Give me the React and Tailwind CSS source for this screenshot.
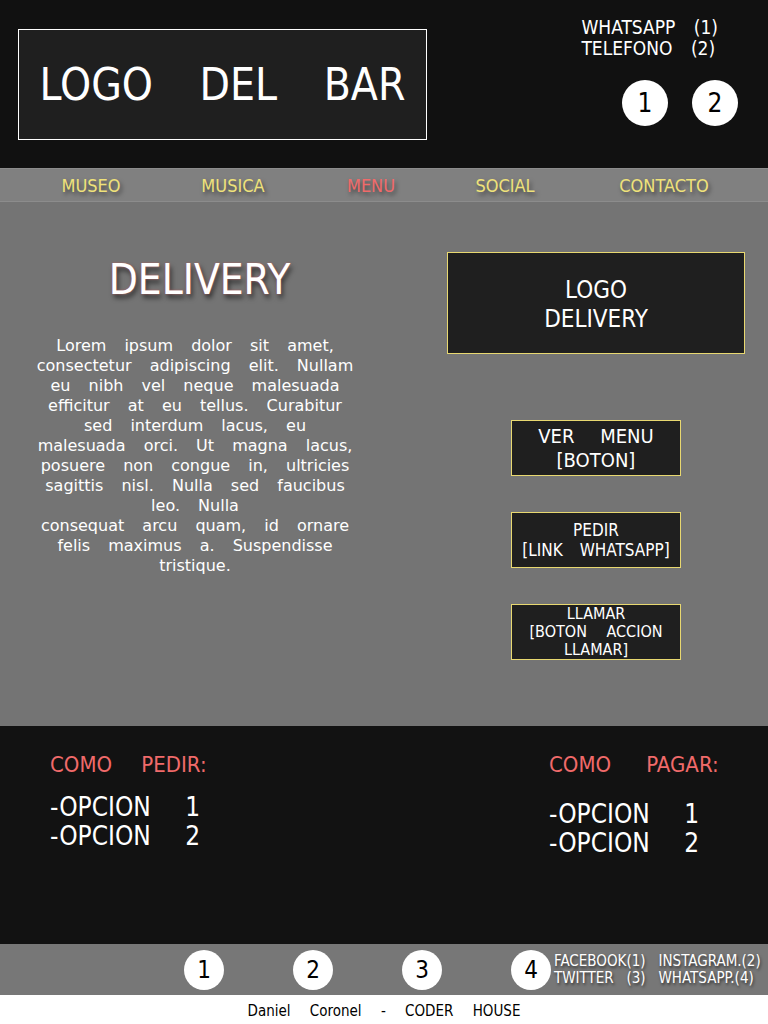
const cond = { fontFamily: '"DejaVu Sans Condensed", "DejaVu Sans", sans-serif' }

function Circle({ n, size = 'h-[46px] w-[46px] text-[26px]' }) {
  return (
    <div className={`flex items-center justify-center rounded-full bg-white text-black ${size}`}>
      {n}
    </div>
  )
}

const lorem = [
  'Lorem ipsum dolor sit amet,',
  'consectetur adipiscing elit. Nullam',
  'eu nibh vel neque malesuada',
  'efficitur at eu tellus. Curabitur',
  'sed interdum lacus, eu',
  'malesuada orci. Ut magna lacus,',
  'posuere non congue in, ultricies',
  'sagittis nisl. Nulla sed faucibus',
  'leo. Nulla',
  'consequat arcu quam, id ornare',
  'felis maximus a. Suspendisse',
  'tristique.',
]

export default function App() {
  const nav = [
    ['MUSEO', 'w-[182px]'],
    ['MUSICA', 'w-[102px]'],
    ['MENU', 'w-[174px]'],
    ['SOCIAL', 'w-[94px]'],
    ['CONTACTO', 'w-[224px]'],
  ]
  return (
    <div className="w-[768px] min-h-[1024px] bg-white" style={cond}>
      <header className="flex h-[168px] items-start justify-between bg-[#111111] pl-[18px] pr-[30px] pt-[29px]">
        <div className="flex h-[111px] w-[409px] items-center justify-center border border-white bg-[#1f1f1f] text-[44px] text-white [word-spacing:34px]">
          LOGO DEL BAR
        </div>
        <div className="flex flex-col items-end">
          <div className="mt-[-12px] mr-[20px] text-[19px] leading-[21px] text-white">
            <div className="[word-spacing:13px]">WHATSAPP (1)</div>
            <div className="[word-spacing:13px]">TELEFONO (2)</div>
          </div>
          <div className="mt-[21px] flex gap-[24px]">
            <Circle n="1" />
            <Circle n="2" />
          </div>
        </div>
      </header>

      <nav className="flex h-[34px] items-center overflow-hidden border-y border-[#8c8c8c] bg-[#808080] text-[18px] [text-shadow:2px_3px_4px_rgba(0,0,0,0.5)]">
        <div className="flex items-center">
          {nav.map(([item, w]) => (
            <div
              key={item}
              className={`shrink-0 text-center ${w} ${item === 'MENU' ? 'text-[#f06a6a]' : 'text-[#efe27a]'}`}
            >
              {item}
            </div>
          ))}
        </div>
      </nav>

      <main className="flex h-[524px] bg-[#747474]">
        <div className="flex w-[400px] flex-col items-center pt-[52px]">
          <h1 className="text-[42px] leading-[52px] text-white [text-shadow:0_0_2px_#c06060,2px_4px_5px_rgba(0,0,0,0.6)]">
            DELIVERY
          </h1>
          <div
            className="mt-[30px] ml-[-9px] text-center text-[16px] leading-[20px] text-white [word-spacing:13px]"
            style={{ fontFamily: '"DejaVu Sans", sans-serif' }}
          >
            {lorem.map((line) => (
              <div key={line}>{line}</div>
            ))}
          </div>
        </div>
        <div className="flex flex-1 flex-col items-center pt-[50px] pl-[48px] pr-[23px]">
          <div className="flex h-[102px] w-[298px] flex-col items-center justify-center border border-[#e8d870] bg-[#1f1f1f] text-[24px] leading-[29px] text-white">
            <div className="mt-[3px]">LOGO</div>
            <div>DELIVERY</div>
          </div>
          <div className="mt-[66px] flex flex-col gap-[36px]">
            <div className="flex h-[56px] w-[170px] flex-col items-center justify-center border border-[#e8d870] bg-[#1f1f1f] text-[20px] leading-[24px] text-white [word-spacing:20px]">
              <div>VER MENU</div>
              <div>[BOTON]</div>
            </div>
            <div className="flex h-[56px] w-[170px] flex-col items-center justify-center border border-[#e8d870] bg-[#1f1f1f] text-[17px] leading-[20px] text-white [word-spacing:12px]">
              <div>PEDIR</div>
              <div>[LINK WHATSAPP]</div>
            </div>
            <div className="flex h-[56px] w-[170px] flex-col items-center justify-center border border-[#e8d870] bg-[#1f1f1f] text-[16px] leading-[18px] text-white [word-spacing:15px]">
              <div>LLAMAR</div>
              <div>[BOTON ACCION</div>
              <div>LLAMAR]</div>
            </div>
          </div>
        </div>
      </main>

      <section className="flex h-[218px] justify-between bg-[#121212] pl-[50px] pr-[50px] pt-[26px]">
        <div className="whitespace-nowrap">
          <div className="text-[22px] leading-[26px] text-[#f06a6a] [word-spacing:23px]">COMO PEDIR:</div>
          <div className="mt-[15px] text-[26px] leading-[29px] text-white [word-spacing:27px]">
            <div>-OPCION 1</div>
            <div>-OPCION 2</div>
          </div>
        </div>
        <div className="w-[169px] whitespace-nowrap">
          <div className="text-[22px] leading-[26px] text-[#f06a6a] [word-spacing:29px]">COMO PAGAR:</div>
          <div className="mt-[22px] text-[26px] leading-[29px] text-white [word-spacing:27px]">
            <div>-OPCION 1</div>
            <div>-OPCION 2</div>
          </div>
        </div>
      </section>

      <div className="flex h-[51px] items-center bg-[#777777] pl-[184px]">
        <div className="flex gap-[69px]">
          <Circle n="1" size="h-[40px] w-[40px] text-[24px]" />
          <Circle n="2" size="h-[40px] w-[40px] text-[24px]" />
          <Circle n="3" size="h-[40px] w-[40px] text-[24px]" />
          <Circle n="4" size="h-[40px] w-[40px] text-[24px]" />
        </div>
        <div className="ml-[3px] grid grid-cols-[auto_auto] gap-x-[13px] text-[15px] leading-[17px] text-white [text-shadow:1px_2px_3px_rgba(0,0,0,0.6)]">
          <div>FACEBOOK(1)</div>
          <div>INSTAGRAM.(2)</div>
          <div className="flex justify-between">
            <span>TWITTER</span>
            <span>(3)</span>
          </div>
          <div>WHATSAPP.(4)</div>
        </div>
      </div>

      <footer className="flex h-[29px] items-center justify-center bg-white pt-[4px] text-[15px] text-black [word-spacing:15px]">
        Daniel Coronel - CODER HOUSE
      </footer>
    </div>
  )
}
